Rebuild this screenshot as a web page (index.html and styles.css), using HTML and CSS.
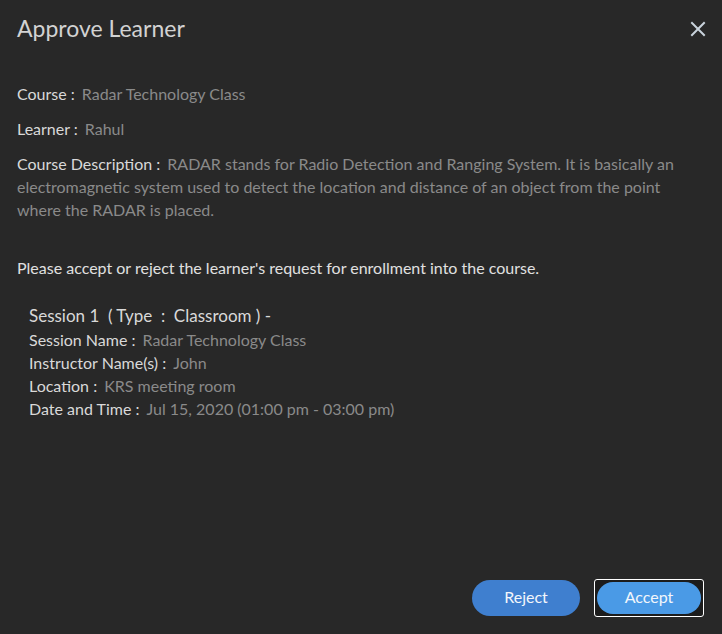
FILE: index.html
```html
<!DOCTYPE html>
<html>
<head>
<meta charset="utf-8">
<link rel="stylesheet" href="styles.css">
</head>
<body>
<div class="modal">
  <div class="header">
    <h1 class="title">Approve Learner</h1>
    <button class="close" aria-label="Close">
      <svg width="16" height="16" viewBox="0 0 16 16"><path d="M2 2L14 14M14 2L2 14" stroke="#c9d3dc" stroke-width="2" stroke-linecap="square"/></svg>
    </button>
  </div>
  <div class="body">
    <p class="row"><span class="label">Course :</span><span class="value">Radar Technology Class</span></p>
    <p class="row"><span class="label">Learner :</span><span class="value">Rahul</span></p>
    <p class="row desc"><span class="label">Course Description :</span><span class="value">RADAR stands for Radio Detection and Ranging System. It is basically an electromagnetic system used to detect the location and distance of an object from the point where the RADAR is placed.</span></p>
    <p class="prompt">Please accept or reject the learner's request for enrollment into the course.</p>
    <div class="session">
      <div class="session-title">Session 1&nbsp; ( Type &nbsp;:&nbsp; Classroom ) -</div>
      <div class="srow"><span class="label">Session Name :</span><span class="value">Radar Technology Class</span></div>
      <div class="srow"><span class="label">Instructor Name(s) :</span><span class="value">John</span></div>
      <div class="srow"><span class="label">Location :</span><span class="value">KRS meeting room</span></div>
      <div class="srow"><span class="label">Date and Time :</span><span class="value">Jul 15, 2020 (01:00 pm - 03:00 pm)</span></div>
    </div>
  </div>
  <div class="footer">
    <button class="btn reject">Reject</button>
    <button class="focus-ring"><span class="btn accept">Accept</span></button>
  </div>
</div>
</body>
</html>
```

FILE: styles.css
```css
html, body {
  margin: 0;
  padding: 0;
  background: #282828;
}
body {
  font-family: Lato, "Open Sans", sans-serif;
  font-size: 16px;
}
.modal {
  width: 722px;
  height: 634px;
  box-sizing: border-box;
  padding: 0 17px;
  display: flex;
  flex-direction: column;
}
.header {
  display: flex;
  justify-content: space-between;
  align-items: center;
  height: 56px;
}
.title {
  margin: 0;
  font-weight: 400;
  font-size: 23px;
  color: #d2d2d2;
}
.close {
  background: none;
  border: none;
  padding: 0;
  margin-right: -2px;
  margin-top: 2px;
  width: 18px;
  height: 18px;
  display: flex;
  align-items: center;
  justify-content: center;
}
.body {
  padding-top: 26px;
  flex: 1;
}
.row {
  margin: 0 0 12px;
  line-height: 23px;
}
.label {
  color: #d9d9d9;
  margin-right: 7px;
}
.value { color: #8a8a8a; }
.desc { margin-bottom: 35px; }
.prompt {
  margin: 0 0 24px;
  color: #e0e0e0;
  line-height: 23px;
}
.session {
  padding-left: 12px;
  line-height: 23px;
}
.session-title {
  font-size: 17px;
  color: #d9d9d9;
  line-height: 25px;
}
.footer {
  display: flex;
  justify-content: flex-end;
  align-items: center;
  gap: 14px;
  padding-bottom: 17px;
  padding-right: 1px;
}
.btn {
  font-family: inherit;
  font-size: 16px;
  color: #f2f6fb;
  border: none;
  border-radius: 18px;
  height: 36px;
  width: 108px;
  padding: 0 0 3px;
  display: flex;
  align-items: center;
  justify-content: center;
  box-sizing: border-box;
}
.reject {
  background: #3f7fcf;
}
.focus-ring {
  padding: 2px;
  border: 1px solid #ffffff;
  border-radius: 3px;
  background: #1c1c1c;
  font-family: inherit;
}
.accept {
  width: 104px;
  height: 32px;
  border-radius: 16px;
  background: #4a9ae6;
}
```
